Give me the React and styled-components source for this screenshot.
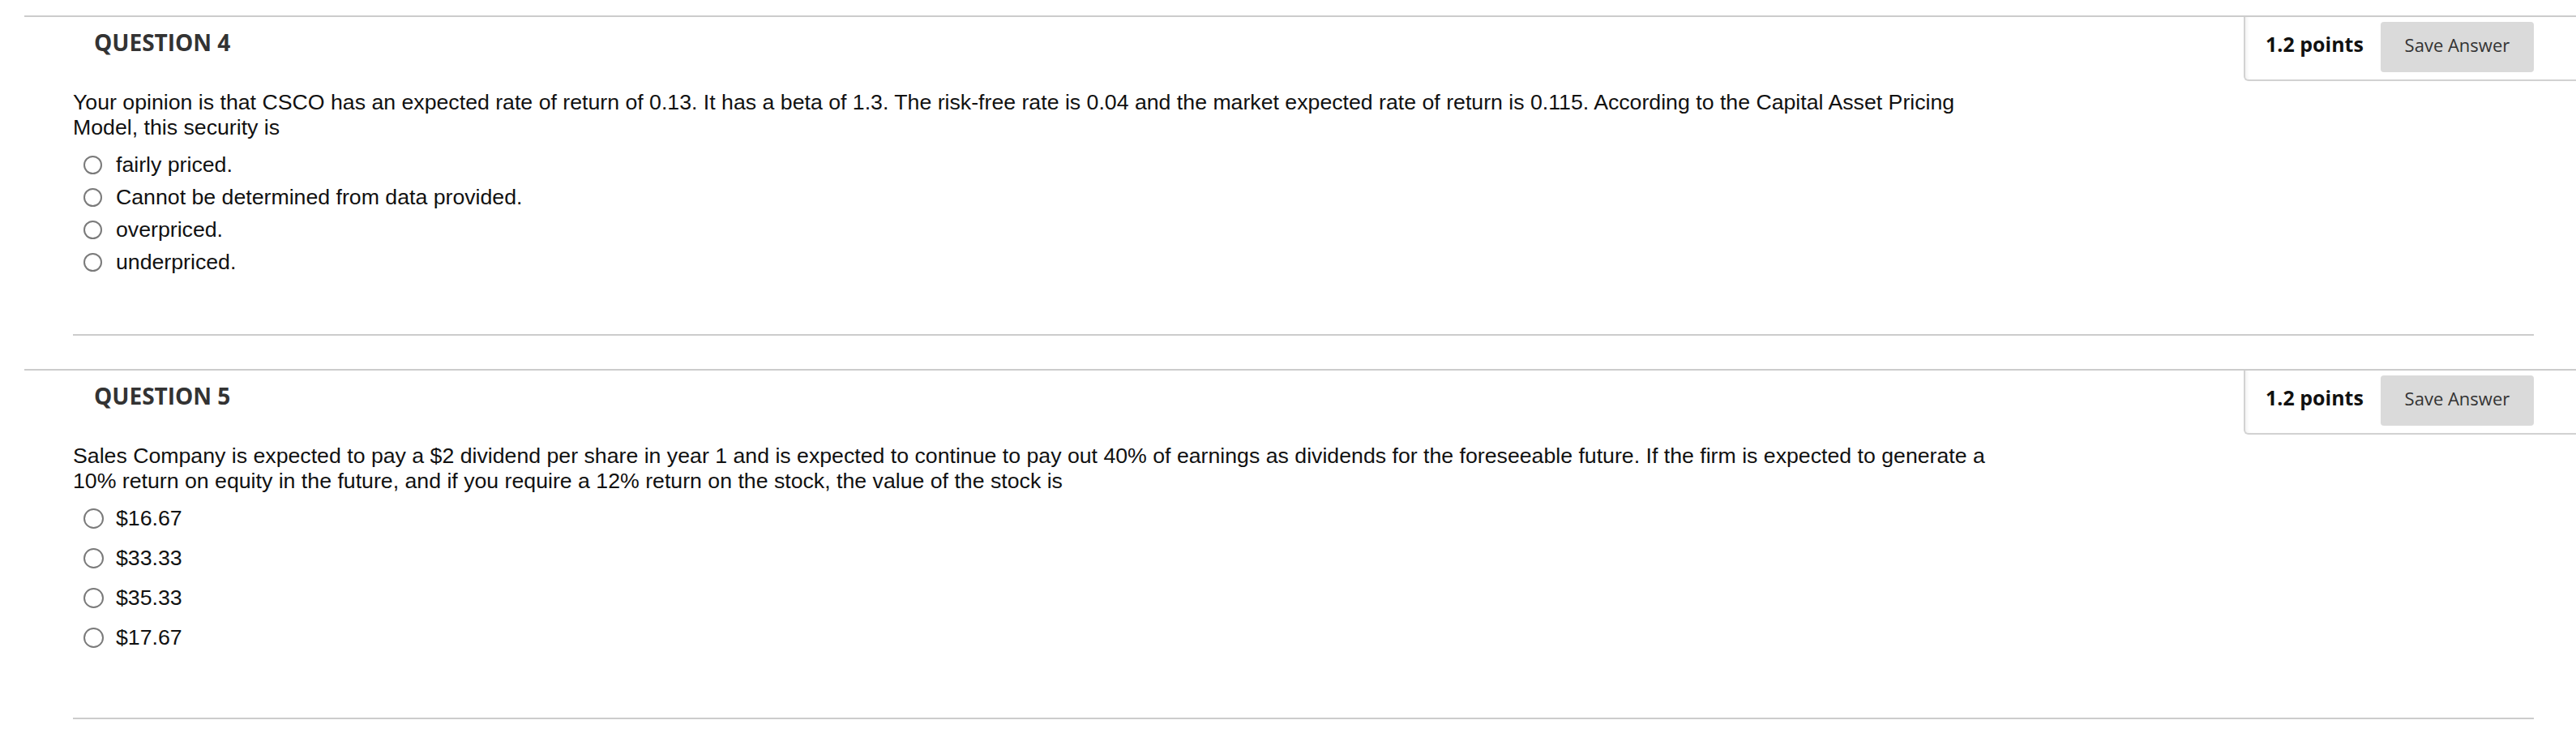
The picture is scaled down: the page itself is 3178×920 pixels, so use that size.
import React from "react";
import styled, { createGlobalStyle } from "styled-components";

const GlobalStyle = createGlobalStyle`
  body {
    margin: 0;
    background: #fff;
    font-family: "Liberation Sans", Arial, sans-serif;
  }
`;

const questions = [
  {
    number: 4,
    points: "1.2 points",
    text:
      "Your opinion is that CSCO has an expected rate of return of 0.13. It has a beta of 1.3. The risk-free rate is 0.04 and the market expected rate of return is 0.115. According to the Capital Asset Pricing Model, this security is",
    options: [
      "fairly priced.",
      "Cannot be determined from data provided.",
      "overpriced.",
      "underpriced.",
    ],
    pitch: 40,
    radio: 23,
    lead: 10,
    tail: 69,
  },
  {
    number: 5,
    points: "1.2 points",
    text:
      "Sales Company is expected to pay a $2 dividend per share in year 1 and is expected to continue to pay out 40% of earnings as dividends for the foreseeable future. If the firm is expected to generate a 10% return on equity in the future, and if you require a 12% return on the stock, the value of the stock is",
    options: ["$16.67", "$33.33", "$35.33", "$17.67"],
    pitch: 49,
    radio: 25,
    lead: 6,
    tail: 74,
  },
];

// set Styled-components
const Page = styled.div`
  width: 3178px;
  padding: 19px 0 0 30px;
  box-sizing: border-box;
`;

const QuestionBlock = styled.section`
  border-top: 2px solid #cccccc;
  & + & {
    margin-top: 41px;
  }
`;

const HeaderRow = styled.div`
  display: flex;
  justify-content: space-between;
  align-items: flex-start;
`;

const Title = styled.h3`
  margin: 0 0 0 86px;
  padding-top: 12px;
  font-family: "Open Sans", sans-serif;
  font-size: 28px;
  line-height: 38px;
  font-weight: 700;
  color: #333333;
`;

const PointsBox = styled.div`
  width: 410px;
  box-sizing: border-box;
  display: flex;
  align-items: baseline;
  gap: 21px;
  padding: 6px 52px 9px 25px;
  border-left: 2px solid #d2d2d2;
  border-bottom: 2px solid #d2d2d2;
  border-bottom-left-radius: 6px;
  box-shadow: inset 4px 0 5px -3px rgba(0, 0, 0, 0.08);
`;

const Points = styled.span`
  font-family: "Open Sans", sans-serif;
  font-size: 25px;
  font-weight: 700;
  color: #111111;
  white-space: nowrap;
`;

const SaveButton = styled.button`
  width: 190px;
  height: 62px;
  padding: 13px 0 19px;
  border: none;
  border-radius: 4px;
  background: #dadada;
  font-family: "Open Sans", sans-serif;
  font-size: 22px;
  line-height: 30px;
  color: #333333;
  cursor: pointer;
`;

const Body = styled.div`
  margin: 0 52px 0 60px;
  padding-bottom: ${(p) => p.$tail}px;
  border-bottom: 2px solid #cccccc;
`;

const QuestionText = styled.p`
  margin: 11px 0 0;
  max-width: 2390px;
  font-size: 26.7px;
  line-height: 31px;
  color: #111111;
`;

const OptionList = styled.ul`
  list-style: none;
  margin: ${(p) => p.$lead}px 0 0;
  padding: 0;
`;

const OptionRow = styled.li`
  display: flex;
  align-items: center;
  height: ${(p) => p.$pitch}px;
  padding-left: 13px;
  font-size: 26.7px;
  color: #111111;
  cursor: pointer;
`;

const Radio = styled.span`
  flex: none;
  width: ${(p) => p.$size}px;
  height: ${(p) => p.$size}px;
  box-sizing: border-box;
  margin-right: ${(p) => 40 - p.$size}px;
  border: 2px solid #7a7a7a;
  border-radius: 50%;
  background: #fff;
`;

const Question = ({ q }) => (
  <QuestionBlock>
    <HeaderRow>
      <Title>QUESTION {q.number}</Title>
      <PointsBox>
        <Points>{q.points}</Points>
        <SaveButton>Save Answer</SaveButton>
      </PointsBox>
    </HeaderRow>
    <Body $tail={q.tail}>
      <QuestionText>{q.text}</QuestionText>
      <OptionList $lead={q.lead}>
        {q.options.map((opt) => (
          <OptionRow key={opt} $pitch={q.pitch}>
            <Radio $size={q.radio} />
            {opt}
          </OptionRow>
        ))}
      </OptionList>
    </Body>
  </QuestionBlock>
);

const App = () => {
  return (
    <>
      <GlobalStyle />
      <Page>
        {questions.map((q) => (
          <Question key={q.number} q={q} />
        ))}
      </Page>
    </>
  );
};

export default App;
